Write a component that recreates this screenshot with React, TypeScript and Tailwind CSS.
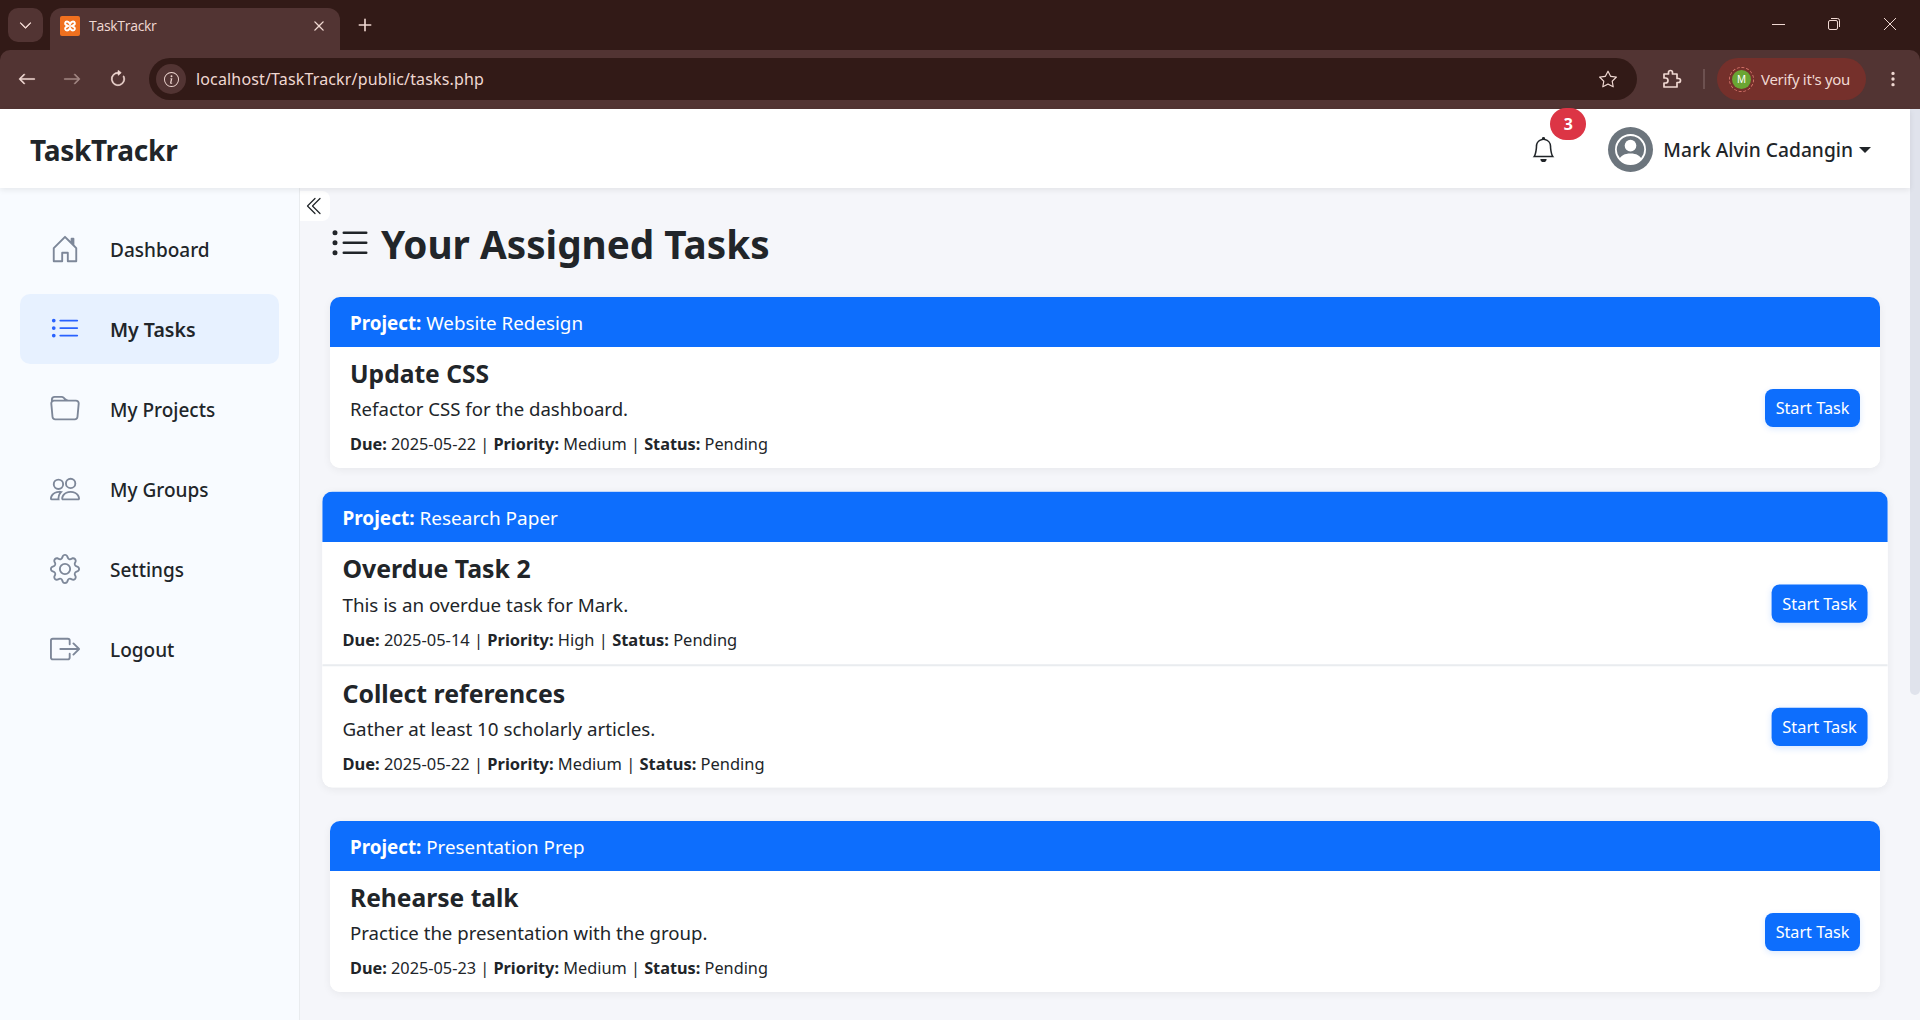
import { BsHouseDoor, BsListUl, BsFolder, BsPeople, BsGear, BsBoxArrowRight, BsChevronDoubleLeft, BsBell, BsPersonCircle, BsStar, BsInfoCircle, BsArrowClockwise, BsArrowLeft, BsArrowRight, BsChevronDown, BsX, BsPlus, BsThreeDotsVertical } from "react-icons/bs";
import type { ReactNode } from "react";

const nav = [
  { label: "Dashboard", Icon: BsHouseDoor },
  { label: "My Tasks", Icon: BsListUl, active: true },
  { label: "My Projects", Icon: BsFolder },
  { label: "My Groups", Icon: BsPeople },
  { label: "Settings", Icon: BsGear },
  { label: "Logout", Icon: BsBoxArrowRight },
];

type Task = { title: string; desc: string; due: string; priority: string };
const Row = ({ t, border }: { t: Task; border?: boolean }) => (
  <div className={`flex items-center justify-between bg-white pl-[20px] pr-[20px] ${border ? "h-[122px] border-t-2 border-[#e9ecef]" : "h-[121px]"}`}>
    <div className="pt-[1px]">
      <h5 className="text-[24.6px] font-bold leading-[29px] text-[#212529]">{t.title}</h5>
      <p className="mt-[7px] text-[18.6px] leading-[28px] text-[#212529]">{t.desc}</p>
      <p className="mt-[8px] text-[16.3px] leading-[26px] text-[#212529]"><b className="font-bold">Due:</b> {t.due} | <b className="font-bold">Priority:</b> {t.priority} | <b className="font-bold">Status:</b> Pending</p>
    </div>
    <button className="h-[38px] w-[95px] rounded-[8px] bg-[#0d6efd] pt-[1px] text-[16.2px] text-white shadow-[0_2px_6px_rgba(13,110,253,0.15)]">Start Task</button>
  </div>
);

const Card = ({ project, hover, children }: { project: string; hover?: boolean; children: ReactNode }) => (
  <section className={`overflow-hidden rounded-[10px] bg-white shadow-[0_2px_8px_rgba(0,0,0,0.06)] ${hover ? "-translate-y-[5px] scale-[1.01]" : ""}`}>
    <div className="flex h-[50px] items-center bg-[#0d6efd] pl-[20px] pt-[2px] text-[18.8px] text-white"><span><b className="font-bold">Project:</b> {project}</span></div>
    {children}
  </section>
);

export default function App() {
  return (
    <div className="flex h-screen flex-col overflow-hidden bg-[#f5f6fa] font-['Noto_Sans','Open_Sans',sans-serif] text-[#212529]">
      <header className="h-[109px] shrink-0 bg-[#321a17] text-[#f0d8d2]">
        <div className="flex h-[50px] items-end pl-[8px]">
          <div className="mb-[8px] flex h-[34px] w-[35px] items-center justify-center rounded-[10px] bg-[#523433]"><BsChevronDown className="h-[13px] w-[13px] stroke-1" /></div>
          <div className="ml-[7px] flex h-[42px] w-[290px] items-center rounded-t-[12px] bg-[#523433] pb-[7px] pl-[10px] pr-[10px]">
            <svg viewBox="0 0 20 20" className="h-[20px] w-[20px]"><rect width="20" height="20" rx="2" fill="#f0701f" /><path d="M7 5.5C5 5.5 4.5 8 6 9L8 10L6 11C4.5 12 5 14.5 7 14.5C8.5 14.5 9.5 13 10 12C10.5 13 11.5 14.5 13 14.5C15 14.5 15.5 12 14 11L12 10L14 9C15.5 8 15 5.5 13 5.5C11.5 5.5 10.5 7 10 8C9.5 7 8.5 5.5 7 5.5Z" fill="none" stroke="#fff" strokeWidth="2" /></svg>
            <span className="ml-[9px] flex-1 font-['Open_Sans',sans-serif] text-[14px] tracking-[-0.3px]">TaskTrackr</span>
            <BsX className="h-[22px] w-[22px]" />
          </div>
          <BsPlus className="mb-[12px] ml-[12px] h-[26px] w-[26px]" />
          <div className="mb-[19px] ml-auto flex w-[149px] items-center">
            <span className="ml-[1px] h-[1px] w-[13px] bg-[#f0d8d2]" />
            <svg viewBox="0 0 14 14" className="ml-[42px] h-[14px] w-[14px]" fill="none" stroke="#f0d8d2"><rect x="1.5" y="3.5" width="9" height="9" rx="1.5" /><path d="M4 1.5h6.5a2 2 0 0 1 2 2V10" /></svg>
            <svg viewBox="0 0 14 14" className="ml-[42px] h-[14px] w-[14px]" fill="none" stroke="#f0d8d2"><path d="M1 1l12 12M13 1L1 13" /></svg>
          </div>
        </div>
        <div className="flex h-[59px] items-center rounded-t-[10px] bg-[#523433] pb-[1px] pl-[18px] pr-[18px]">
          <BsArrowLeft className="h-[18px] w-[18px] stroke-[0.5]" />
          <BsArrowRight className="ml-[27px] h-[18px] w-[18px] stroke-[0.5] opacity-50" />
          <BsArrowClockwise className="ml-[28px] h-[18px] w-[18px] stroke-[0.5]" />
          <div className="ml-[22px] flex h-[42px] w-[1488px] items-center rounded-full bg-[#321a17] pl-[7px] pr-[20px]">
            <span className="flex h-[30px] w-[30px] items-center justify-center rounded-full bg-[#523433]"><BsInfoCircle className="h-[15px] w-[15px]" /></span>
            <span className="ml-[10px] flex-1 text-[16px] tracking-[0.15px]">localhost/TaskTrackr/public/tasks.php</span>
            <BsStar className="h-[18px] w-[18px]" />
          </div>
          <svg viewBox="0 0 22 22" className="ml-[24px] h-[22px] w-[22px]" fill="none" stroke="#f0d8d2" strokeWidth="1.7" strokeLinejoin="round"><path d="M3 6h4.5V4.5a2 2 0 0 1 4 0V6H16v4.5h1.5a2 2 0 0 1 0 4H16V19H3v-4h1.5a2.5 2.5 0 0 0 0-5H3z" /></svg>
          <span className="ml-[20px] h-[20px] w-[2px] bg-[#6d5150]" />
          <div className="ml-[12px] flex h-[42px] w-[149px] items-center rounded-full bg-[#75302b] pl-[15px]">
            <span className="flex h-[19px] w-[19px] items-center justify-center rounded-full bg-[#6aa533] text-[10px] text-white outline-1 outline-offset-[2px] outline-dashed outline-[#d9766d]">M</span>
            <span className="ml-[10px] text-[15px] tracking-[-0.3px]">Verify it's you</span>
          </div>
          <BsThreeDotsVertical className="ml-[18px] h-[18px] w-[18px]" />
        </div>
      </header>
      <div className="flex min-h-0 flex-1">
        <div className="flex min-w-0 flex-1 flex-col">
          <nav className="relative z-10 flex h-[79px] shrink-0 items-center bg-white pl-[30px] pr-[39px] pt-[2px] shadow-[0_2px_6px_rgba(0,0,0,0.08)]">
            <span className="text-[28px] font-bold leading-none tracking-[-0.25px]">TaskTrackr</span>
            <div className="relative ml-auto">
              <BsBell className="h-[25px] w-[25px]" />
              <span className="absolute -top-[29px] left-[19px] flex h-[32px] w-[36px] items-center justify-center rounded-full bg-[#dc3545] text-[16px] font-bold text-white">3</span>
            </div>
            <span className="relative ml-[52px] flex h-[45px] w-[45px] items-center justify-center rounded-full bg-[#6c757d]">
              <BsPersonCircle className="h-[31px] w-[31px] text-white" />
            </span>
            <span className="ml-[10px] pt-[2px] text-[19.2px] font-medium">Mark Alvin Cadangin</span>
            <span className="ml-[6px] h-0 w-0 border-x-[6px] border-t-[6px] border-x-transparent border-t-[#212529]" />
          </nav>
          <div className="flex min-h-0 flex-1">
            <aside className="w-[300px] shrink-0 border-r border-[#e9ecef] bg-[#f8fbff] px-[20px] pt-[26px]">
              {nav.map(({ label, Icon, active }) => (
                <div key={label} className={`mb-[10px] flex h-[70px] items-center rounded-[10px] pl-[30px] ${active ? "bg-[#e7f1ff] text-[19.5px] font-semibold" : "text-[19px] font-medium"}`}>
                  <Icon className={`h-[30px] w-[30px] ${active ? "text-[#2962ff]" : "text-[#7d8799]"}`} />
                  <span className="ml-[30px] pt-[2px]">{label}</span>
                </div>
              ))}
            </aside>
            <main className="relative flex-1 px-[30px] pt-[31px]">
              <button className="absolute left-0 top-[3px] flex h-[30px] w-[30px] items-center justify-center rounded-r-[8px] bg-white"><BsChevronDoubleLeft className="h-[20px] w-[20px]" /></button>
              <h1 className="flex h-[50px] items-center text-[38.7px] font-bold leading-none"><BsListUl className="mr-[11px] h-[40px] w-[40px]" />Your Assigned Tasks</h1>
              <div className="mt-[28px] flex flex-col gap-[30px]">
                <Card project="Website Redesign"><Row t={{ title: "Update CSS", desc: "Refactor CSS for the dashboard.", due: "2025-05-22", priority: "Medium" }} /></Card>
                <Card project="Research Paper" hover>
                  <Row t={{ title: "Overdue Task 2", desc: "This is an overdue task for Mark.", due: "2025-05-14", priority: "High" }} />
                  <Row border t={{ title: "Collect references", desc: "Gather at least 10 scholarly articles.", due: "2025-05-22", priority: "Medium" }} />
                </Card>
                <Card project="Presentation Prep"><Row t={{ title: "Rehearse talk", desc: "Practice the presentation with the group.", due: "2025-05-23", priority: "Medium" }} /></Card>
              </div>
            </main>
          </div>
        </div>
        <div className="w-[10px] shrink-0 bg-[#f5f6fa]"><div className="h-[586px] rounded-b-[6px] bg-[#e0e3ec]" /></div>
      </div>
    </div>
  );
}
